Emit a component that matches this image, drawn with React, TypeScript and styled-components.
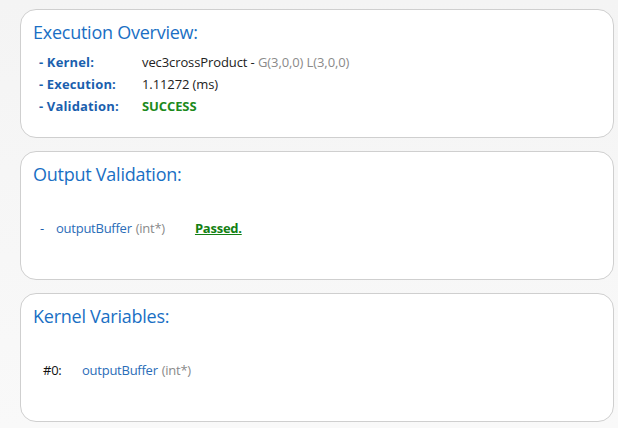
import React from "react";
import styled, { createGlobalStyle } from "styled-components";

const GlobalStyle = createGlobalStyle`
  html, body {
    margin: 0;
    padding: 0;
    background: #f5f5f5;
  }
  body {
    font-family: "Open Sans", "Noto Sans", Arial, sans-serif;
    font-size: 13px;
  }
`;

const Page = styled.div`
  width: 618px;
  height: 428px;
  box-sizing: border-box;
  padding: 9px 4px 0 20px;
  display: flex;
  flex-direction: column;
  gap: 13px;
  background: linear-gradient(#f4f4f4, #f9f9f9);
`;

const Card = styled.section`
  height: 129px;
  box-sizing: border-box;
  background: #fff;
  border: 1px solid #cfcfcf;
  border-radius: 16px;
  padding: 8px 12px 0 12px;
`;

const Title = styled.h2`
  margin: 0;
  font-size: 18px;
  font-weight: 400;
  color: #1a6fc4;
  line-height: 28px;
  letter-spacing: -0.25px;
`;

const InfoList = styled.div`
  margin-top: 7px;
  padding-left: 6px;
  display: grid;
  grid-template-columns: 103px auto;
  row-gap: 4px;
  line-height: 18px;
`;

const Label = styled.div`
  font-weight: 700;
  color: #1b5fae;
  letter-spacing: 0.15px;
`;

const Value = styled.div<{ $tone?: "success" }>`
  color: ${(p) => (p.$tone === "success" ? "#1c8a1c" : "#222")};
  font-weight: ${(p) => (p.$tone === "success" ? 700 : 400)};
  letter-spacing: -0.1px;
`;

const Muted = styled.span`
  color: #8a8a8a;
`;

const Row = styled.div<{ $top: number; $indent: number }>`
  margin-top: ${(p) => p.$top}px;
  padding-left: ${(p) => p.$indent}px;
  display: flex;
  align-items: baseline;
  line-height: 18px;
  letter-spacing: -0.25px;
`;

const Dash = styled.span`
  color: #1b5fae;
  width: 16px;
`;

const Index = styled.span`
  color: #111;
  width: 39px;
`;

const VarName = styled.span`
  color: #2a6db8;
`;

const VarType = styled.span<{ $gap: number }>`
  color: #8a8a8a;
  margin-left: ${(p) => p.$gap}px;
`;

const Passed = styled.span`
  margin-left: 30px;
  color: #138013;
  font-weight: 700;
  text-decoration: underline;
`;

export default function App() {
  return (
    <>
      <GlobalStyle />
      <Page>
        <Card>
          <Title>Execution Overview:</Title>
          <InfoList>
            <Label>- Kernel:</Label>
            <Value>
              vec3crossProduct - <Muted>G(3,0,0) L(3,0,0)</Muted>
            </Value>
            <Label>- Execution:</Label>
            <Value>1.11272 (ms)</Value>
            <Label>- Validation:</Label>
            <Value $tone="success">SUCCESS</Value>
          </InfoList>
        </Card>
        <Card>
          <Title>Output Validation:</Title>
          <Row $top={31} $indent={7}>
            <Dash>-</Dash>
            <VarName>outputBuffer</VarName>
            <VarType $gap={4}>(int*)</VarType>
            <Passed>Passed.</Passed>
          </Row>
        </Card>
        <Card>
          <Title>Kernel Variables:</Title>
          <Row $top={31} $indent={10}>
            <Index>#0:</Index>
            <VarName>outputBuffer</VarName>
            <VarType $gap={4}>(int*)</VarType>
          </Row>
        </Card>
      </Page>
    </>
  );
}
